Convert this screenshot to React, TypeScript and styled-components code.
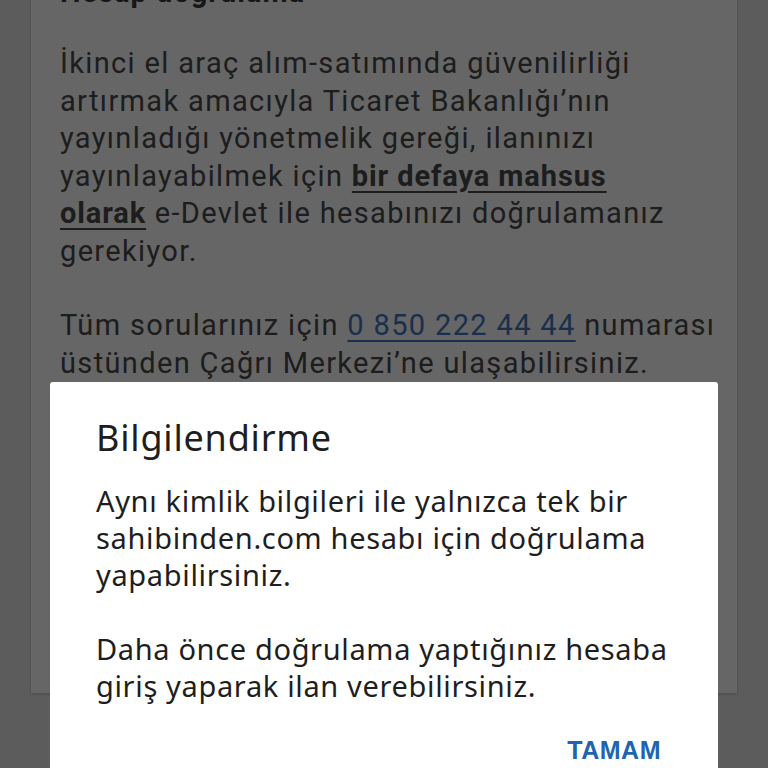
import React from "react";
import styled, { createGlobalStyle } from "styled-components";

const GlobalStyle = createGlobalStyle`
  html, body {
    margin: 0;
    padding: 0;
    height: 100%;
    overflow: hidden;
    background: #e6e6e6;
  }
`;

const Page = styled.div`
  height: 768px;
  padding: 0 31px;
  box-sizing: border-box;
  font-family: Roboto, "Noto Sans", sans-serif;
  color: #4a4a4a;
`;

const Card = styled.div`
  background: #ffffff;
  margin-top: -26px;
  padding: 0 29px 0 29px;
  height: 719px;
  box-shadow: 0 1px 3px rgba(0, 0, 0, 0.2);
`;

const CardTitle = styled.div`
  font-size: 29px;
  font-weight: 700;
  letter-spacing: 1px;
  line-height: 37px;
  padding-bottom: 34px;
  color: #3a3a3a;
`;

const Paragraph = styled.p`
  margin: 0 0 37px 0;
  font-size: 29px;
  letter-spacing: 1.35px;
  line-height: 37.5px;
  white-space: nowrap;
`;

const Strong = styled.span`
  font-weight: 700;
  letter-spacing: 0.9px;
  text-decoration: underline;
  text-underline-offset: 5px;
`;

const PhoneLink = styled.a`
  color: #3d78c0;
  text-decoration: underline;
  text-underline-offset: 5px;
`;

const Overlay = styled.div`
  position: fixed;
  inset: 0;
  background: rgba(0, 0, 0, 0.6);
`;

const Dialog = styled.div`
  position: fixed;
  left: 50px;
  top: 382px;
  width: 668px;
  height: 420px;
  background: #ffffff;
  border-radius: 3px;
  box-sizing: border-box;
  padding: 34px 57px 0 46px;
  font-family: "Noto Sans", "Open Sans", sans-serif;
  color: #1e1e1e;
`;

const DialogTitle = styled.div`
  font-size: 36px;
  letter-spacing: 0.8px;
  line-height: 44px;
  margin-bottom: 22px;
`;

const DialogText = styled.p`
  margin: 0 0 37px 0;
  font-size: 29px;
  letter-spacing: 0.65px;
  line-height: 37px;
  white-space: nowrap;

  &:last-of-type {
    margin-bottom: 0;
  }
`;

const Actions = styled.div`
  display: flex;
  justify-content: flex-end;
  margin-top: 32px;
`;

const OkButton = styled.button`
  border: none;
  background: none;
  padding: 0;
  font-family: "Liberation Sans", Arial, sans-serif;
  font-weight: 700;
  font-size: 25px;
  color: #1e64ae;
  letter-spacing: 0.5px;
`;

export default function App() {
  return (
    <>
      <GlobalStyle />
      <Page>
        <Card>
          <CardTitle>Hesap doğrulama</CardTitle>
          <Paragraph>
            İkinci el araç alım-satımında güvenilirliği
            <br />
            artırmak amacıyla Ticaret Bakanlığı’nın
            <br />
            yayınladığı yönetmelik gereği, ilanınızı
            <br />
            yayınlayabilmek için <Strong>bir defaya mahsus</Strong>
            <br />
            <Strong>olarak</Strong> e-Devlet ile hesabınızı doğrulamanız
            <br />
            gerekiyor.
          </Paragraph>
          <Paragraph>
            Tüm sorularınız için <PhoneLink>0 850 222 44 44</PhoneLink> numarası
            <br />
            üstünden Çağrı Merkezi’ne ulaşabilirsiniz.
          </Paragraph>
        </Card>
      </Page>
      <Overlay />
      <Dialog>
        <DialogTitle>Bilgilendirme</DialogTitle>
        <DialogText>
          Aynı kimlik bilgileri ile yalnızca tek bir
          <br />
          sahibinden.com hesabı için doğrulama
          <br />
          yapabilirsiniz.
        </DialogText>
        <DialogText>
          Daha önce doğrulama yaptığınız hesaba
          <br />
          giriş yaparak ilan verebilirsiniz.
        </DialogText>
        <Actions>
          <OkButton>TAMAM</OkButton>
        </Actions>
      </Dialog>
    </>
  );
}
